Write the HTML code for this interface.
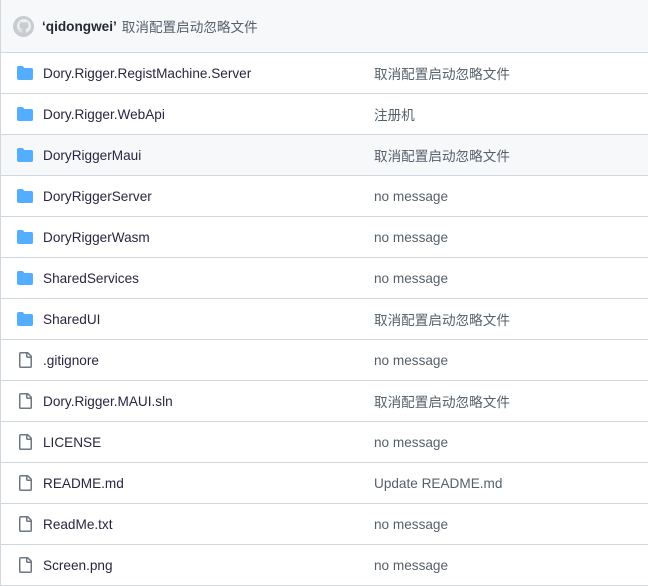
<!DOCTYPE html>
<html><head><meta charset="utf-8"><style>
*{margin:0;padding:0;box-sizing:border-box}
body{width:648px;height:586px;background:#fff;font-family:"Liberation Sans","Noto Sans CJK SC",sans-serif;font-size:13.6px;color:#24292f;overflow:hidden}
.wrap{border-left:1px solid #d0d7de;height:586px}
.hdr{height:53px;background:#f6f8fa;border-bottom:1px solid #d0d7de;display:flex;align-items:center;padding-left:12px}
.av{width:21px;height:21px;border-radius:50%;background:#c8ccd0;margin-right:8px;display:flex;align-items:center;justify-content:center}
.hdr b{color:#24292f;margin-right:5px}
.hdr span{color:#57606a}
.row{height:41px;border-bottom:1px solid #d0d7de;position:relative;display:flex;align-items:center}
.row.h{background:#f6f8fa}
.ic{position:absolute;left:16px;top:12px}
.nm{position:absolute;left:42px;color:#2a2540}
.ms{position:absolute;left:373px;color:#57606a}
</style></head><body><div class="wrap">
<div class="hdr"><div class="av"><svg width="14" height="14" viewBox="0 0 16 16"><path fill="#eee" d="M8 0C3.6 0 0 3.6 0 8c0 3.5 2.3 6.5 5.5 7.6.4.1.5-.2.5-.4v-1.4c-2.2.5-2.7-1-2.7-1-.4-.9-.9-1.2-.9-1.2-.7-.5.1-.5.1-.5.8.1 1.2.8 1.2.8.7 1.2 1.9.9 2.3.7.1-.5.3-.9.5-1.1-1.8-.2-3.6-.9-3.6-4 0-.9.3-1.6.8-2.1-.1-.2-.4-1 .1-2.1 0 0 .7-.2 2.2.8.6-.2 1.3-.3 2-.3s1.4.1 2 .3c1.5-1 2.2-.8 2.2-.8.4 1.1.2 1.9.1 2.1.5.6.8 1.3.8 2.1 0 3.1-1.9 3.8-3.6 4 .3.3.6.8.6 1.5v2.2c0 .2.1.5.6.4C13.7 14.5 16 11.5 16 8c0-4.4-3.6-8-8-8z"/></svg></div><b>‘qidongwei’</b><span>取消配置启动忽略文件</span></div>
<div id="rows"></div>
</div>
<script>
var F='<svg class="ic" width="16" height="16" viewBox="0 0 16 16"><path fill="#54aeff" d="M1.75 1A1.75 1.75 0 0 0 0 2.75v10.5C0 14.216.784 15 1.75 15h12.5A1.75 1.75 0 0 0 16 13.25v-8.5A1.75 1.75 0 0 0 14.25 3H7.5a.25.25 0 0 1-.2-.1l-.9-1.2C6.07 1.26 5.55 1 5 1H1.75z"/></svg>';
var D='<svg class="ic" width="16" height="16" viewBox="0 0 16 16"><path fill="#6e7781" d="M2 1.75C2 .784 2.784 0 3.75 0h6.586c.464 0 .909.184 1.237.513l2.914 2.914c.329.328.513.773.513 1.237v9.586A1.75 1.75 0 0 1 13.25 16h-9.5A1.75 1.75 0 0 1 2 14.25Zm1.75-.25a.25.25 0 0 0-.25.25v12.5c0 .138.112.25.25.25h9.5a.25.25 0 0 0 .25-.25V6h-2.75A1.75 1.75 0 0 1 9 4.25V1.5Zm6.75.062V4.25c0 .138.112.25.25.25h2.688l-.011-.013-2.914-2.914-.013-.011Z"/></svg>';
var c='取消配置启动忽略文件',n='no message';
var R=[[F,'Dory.Rigger.RegistMachine.Server',c],[F,'Dory.Rigger.WebApi','注册机'],[F,'DoryRiggerMaui',c,1],[F,'DoryRiggerServer',n],[F,'DoryRiggerWasm',n],[F,'SharedServices',n],[F,'SharedUI',c],[D,'.gitignore',n],[D,'Dory.Rigger.MAUI.sln',c],[D,'LICENSE',n],[D,'README.md','Update README.md'],[D,'ReadMe.txt',n],[D,'Screen.png',n]];
var h='';R.forEach(function(r){h+='<div class="row'+(r[3]?' h':'')+'">'+r[0]+'<span class="nm">'+r[1]+'</span><span class="ms">'+r[2]+'</span></div>'});
document.getElementById('rows').innerHTML=h;
</script>
</body></html>
